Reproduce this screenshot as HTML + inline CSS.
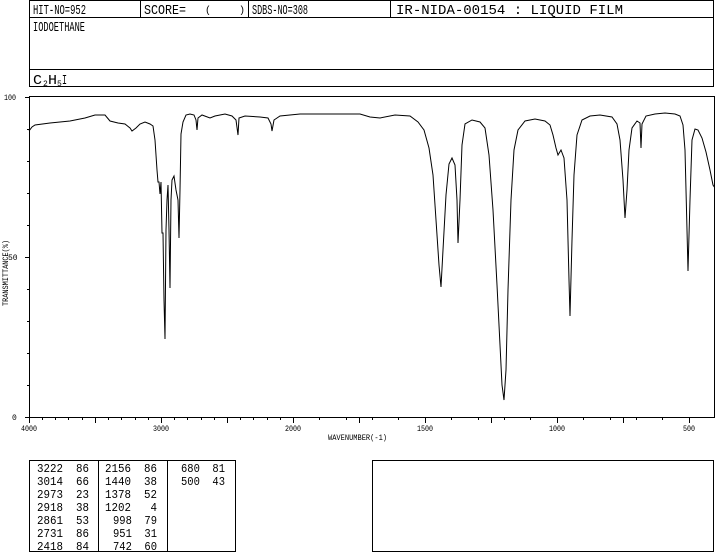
<!DOCTYPE html>
<html><head><style>html,body{margin:0;padding:0;background:#fff}svg{display:block}text{white-space:pre}</style></head><body>
<svg width="715" height="553" viewBox="0 0 715 553" xmlns="http://www.w3.org/2000/svg" font-family="Liberation Mono, monospace" fill="#000" xml:space="preserve">
<g fill="none" stroke="#000" stroke-width="1">
<rect x="29.5" y="0.5" width="684" height="86"/>
<line x1="29" y1="17.5" x2="714" y2="17.5"/>
<line x1="29" y1="69.5" x2="714" y2="69.5"/>
<line x1="140.5" y1="0" x2="140.5" y2="17"/>
<line x1="248.5" y1="0" x2="248.5" y2="17"/>
<line x1="390.5" y1="0" x2="390.5" y2="17"/>
<rect x="29.5" y="96.5" width="685" height="321"/>
<path d="M25 97.5H29M25 257.5H29M25 417.5H29M27 129.5H29M27 161.5H29M27 193.5H29M27 225.5H29M27 289.5H29M27 321.5H29M27 353.5H29M27 385.5H29"/>
<path d="M29.5 417V423M95.5 417V423M161.5 417V423M227.5 417V423M293.5 417V423M359.5 417V423M425.5 417V423M491.5 417V423M557.5 417V423M623.5 417V423M689.5 417V423M42.5 417V420M55.5 417V420M68.5 417V420M82.5 417V420M108.5 417V420M121.5 417V420M135.5 417V420M148.5 417V420M174.5 417V420M187.5 417V420M201.5 417V420M214.5 417V420M240.5 417V420M253.5 417V420M267.5 417V420M280.5 417V420M319.5 417V420M346.5 417V420M372.5 417V420M398.5 417V420M451.5 417V420M478.5 417V420M504.5 417V420M530.5 417V420M583.5 417V420M610.5 417V420M636.5 417V420M662.5 417V420"/>
<rect x="29.5" y="460.5" width="206" height="91"/>
<line x1="98.5" y1="460" x2="98.5" y2="552"/>
<line x1="167.5" y1="460" x2="167.5" y2="552"/>
<rect x="372.5" y="460.5" width="341" height="91"/>
<polyline points="29,131 32,127 35,125 50,123 70,121 85,118 95,115 105,115 110,121 118,123 125,124 130,128 132,131 136,128 140,124 145,122 150,124 153,126 155,140 157,170 158,182 159,182 160,194 161,182 162,233 163,233 164,300 165,339 166,230 167,200 168,185 169,230 170,288 171,200 172,180 174,176 176,190 178,200 179,238 180,190 181,134 183,122 186,115 190,114 194,115 196,120 197,130 198,118 202,115 210,118 215,116 225,114 232,116 236,120 238,135 239,118 245,116 260,117 268,118 271,124 272,131 274,120 280,116 300,114 330,114 360,114 370,117 380,118 395,115 410,116 418,122 424,130 429,148 433,175 436,220 439,265 441,287 443,250 446,195 449,164 452,158 455,165 457,200 458,243 460,200 462,145 465,124 472,120 480,122 485,128 489,155 493,210 497,285 500,345 502,385 504,400 506,370 508,290 511,200 514,150 518,130 525,121 535,119 545,121 550,125 553,135 556,148 558,155 561,150 564,158 567,200 569,280 570,316 572,240 574,175 577,135 582,120 590,116 600,115 612,117 617,124 620,140 623,180 625,218 627,190 629,150 632,128 637,121 640,123 641,148 642,124 646,116 655,114 665,113 675,114 680,116 683,125 685,150 687,230 688,271 690,200 692,140 695,129 698,130 702,138 706,152 710,170 713,185 715,188"/>
</g>
<g font-size="14">
<text x="33" y="14" textLength="53" lengthAdjust="spacingAndGlyphs">HIT-NO=952</text>
<text x="144" y="14" textLength="42" lengthAdjust="spacingAndGlyphs">SCORE=</text>
<text x="205" y="13" font-size="10">(</text><text x="239" y="13" font-size="10">)</text>
<text x="252" y="14" textLength="56" lengthAdjust="spacingAndGlyphs">SDBS-NO=308</text>
<text x="396" y="14" textLength="227" lengthAdjust="spacingAndGlyphs">IR-NIDA-00154 : LIQUID FILM</text>
<text x="33" y="31" textLength="52" lengthAdjust="spacingAndGlyphs">IODOETHANE</text>
<text x="33" y="84" textLength="9" lengthAdjust="spacingAndGlyphs">C</text>
<text x="43" y="86" font-size="8">2</text>
<text x="48" y="84" textLength="9" lengthAdjust="spacingAndGlyphs">H</text>
<text x="57" y="86" font-size="8">5</text>
<text x="62" y="84" textLength="5" lengthAdjust="spacingAndGlyphs">I</text>
</g>
<g font-size="8">
<text x="4" y="100" textLength="12" lengthAdjust="spacingAndGlyphs">100</text>
<text x="8" y="260">50</text>
<text x="12" y="420">0</text>
<text transform="translate(8,306) rotate(-90)" textLength="66" lengthAdjust="spacingAndGlyphs">TRANSMITTANCE(%)</text>
<text x="21" y="431" textLength="16" lengthAdjust="spacingAndGlyphs">4000</text>
<text x="153" y="431" textLength="16" lengthAdjust="spacingAndGlyphs">3000</text>
<text x="285" y="431" textLength="16" lengthAdjust="spacingAndGlyphs">2000</text>
<text x="417" y="431" textLength="16" lengthAdjust="spacingAndGlyphs">1500</text>
<text x="549" y="431" textLength="16" lengthAdjust="spacingAndGlyphs">1000</text>
<text x="683" y="431" textLength="12" lengthAdjust="spacingAndGlyphs">500</text>
<text x="328" y="440" textLength="59" lengthAdjust="spacingAndGlyphs">WAVENUMBER(-1)</text>
</g>
<g font-size="12">
<text x="37" y="472" textLength="52" lengthAdjust="spacingAndGlyphs">3222  86</text>
<text x="37" y="485" textLength="52" lengthAdjust="spacingAndGlyphs">3014  66</text>
<text x="37" y="498" textLength="52" lengthAdjust="spacingAndGlyphs">2973  23</text>
<text x="37" y="511" textLength="52" lengthAdjust="spacingAndGlyphs">2918  38</text>
<text x="37" y="524" textLength="52" lengthAdjust="spacingAndGlyphs">2861  53</text>
<text x="37" y="537" textLength="52" lengthAdjust="spacingAndGlyphs">2731  86</text>
<text x="37" y="550" textLength="52" lengthAdjust="spacingAndGlyphs">2418  84</text>
<text x="105" y="472" textLength="52" lengthAdjust="spacingAndGlyphs">2156  86</text>
<text x="105" y="485" textLength="52" lengthAdjust="spacingAndGlyphs">1440  38</text>
<text x="105" y="498" textLength="52" lengthAdjust="spacingAndGlyphs">1378  52</text>
<text x="105" y="511" textLength="52" lengthAdjust="spacingAndGlyphs">1202   4</text>
<text x="113" y="524" textLength="44" lengthAdjust="spacingAndGlyphs">998  79</text>
<text x="113" y="537" textLength="44" lengthAdjust="spacingAndGlyphs">951  31</text>
<text x="113" y="550" textLength="44" lengthAdjust="spacingAndGlyphs">742  60</text>
<text x="181" y="472" textLength="44" lengthAdjust="spacingAndGlyphs">680  81</text>
<text x="181" y="485" textLength="44" lengthAdjust="spacingAndGlyphs">500  43</text>
</g>
</svg>
</body></html>
